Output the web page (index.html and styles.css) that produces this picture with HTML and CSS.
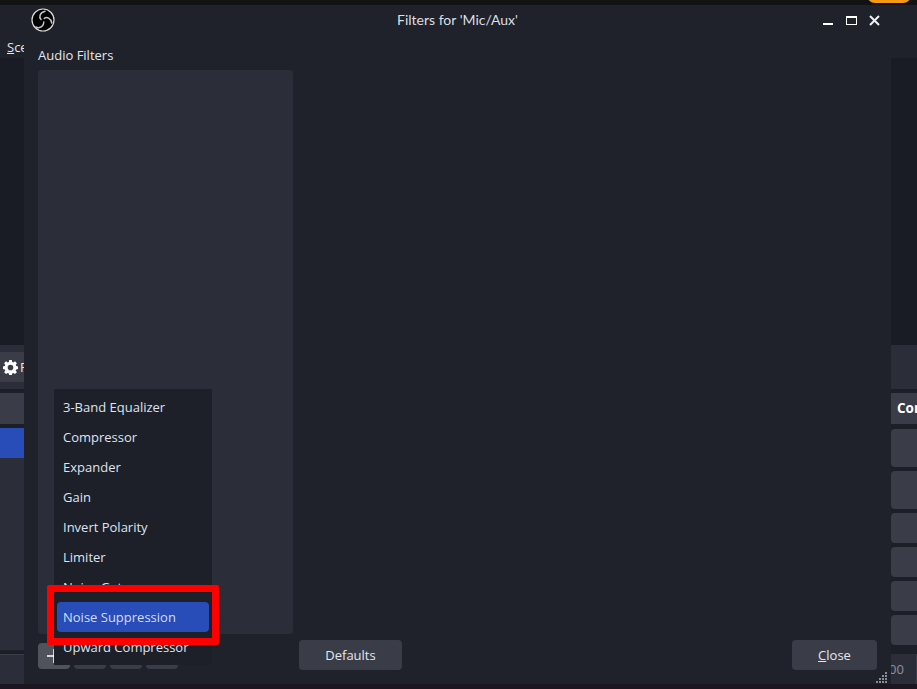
FILE: index.html
```html
<!DOCTYPE html>
<html lang="en">
<head>
<meta charset="utf-8">
<title>Filters for 'Mic/Aux'</title>
<link rel="stylesheet" href="styles.css">
</head>
<body>
<div class="screen">
  <div class="topbar"><span class="pill"></span></div>
  <div class="app">
    <div class="side side-left">
      <div class="menu-strip"><span class="menu-word"><u>S</u>cenes</span></div>
      <div class="preview"></div>
      <div class="toolbar">
        <div class="tool-btn">
          <svg class="gear" viewBox="0 0 16 16" width="15" height="15"><path fill="#fff" fill-rule="evenodd" d="M6.600 0h2.800l.4 2.100 1.200.5L12.800 1.400l2 2-1.200 1.800.5 1.200 1.900.4v2.800l-1.900.4-.5 1.200 1.200 1.800-2 2-1.800-1.200-1.200.5-.4 1.900H6.600l-.4-1.900-1.200-.5-1.800 1.200-2-2 1.200-1.800-.5-1.200L0 9.600V6.800l1.900-.4.500-1.200-1.200-1.800 2-2L5 2.600l1.200-.5zM8 5a3 3 0 1 0 0 6 3 3 0 0 0 0-6z"/></svg>
          <span class="tool-label">Filters</span>
        </div>
      </div>
      <div class="source-head"></div>
      <div class="source-sel"></div>
      <div class="source-list"></div>
      <div class="status-cell"></div>
    </div>
    <div class="side side-right">
      <div class="menu-strip"></div>
      <div class="preview"></div>
      <div class="toolbar-tall"></div>
      <div class="controls-head"><span class="controls-word">Controls</span></div>
      <div class="ctl ctl-tall"></div>
      <div class="ctl ctl-tall"></div>
      <div class="ctl"></div>
      <div class="ctl"></div>
      <div class="ctl"></div>
      <div class="ctl"></div>
      <div class="status-right"><span class="status-word">00</span></div>
    </div>
  </div>

  <section class="dialog">
    <header class="titlebar">
      <svg class="logo" viewBox="0 0 24 24" width="24" height="24">
        <circle cx="12" cy="12" r="11" fill="#000" stroke="#dcdcdc" stroke-width="1.200"/>
        <g fill="none" stroke="#c4c4c4" stroke-width="1.500" stroke-linecap="round">
          <path d="M10 11.500C7.800 9 8.600 4.600 14 3.200"/>
          <path d="M13.300 10.400C15.800 8.600 19.800 10 20.800 15"/>
          <path d="M12.800 13.900C13 17.800 9.600 21 4.800 19"/>
        </g>
      </svg>
      <h1 class="title">Filters for 'Mic/Aux'</h1>
      <div class="winctl">
        <span class="win-min"></span>
        <span class="win-max"></span>
        <svg class="win-close" viewBox="0 0 11 11" width="11" height="11"><path d="M1 1l9 9M10 1l-9 9" stroke="#f0f0f0" stroke-width="2" fill="none"/></svg>
      </div>
    </header>
    <div class="label">Audio Filters</div>
    <div class="body">
      <div class="left-col">
        <div class="filter-list"></div>
        <div class="list-tools">
          <div class="tool tool-add"><svg viewBox="0 0 14 14" width="14" height="14"><path d="M0 7h14M7 0v14" stroke="#fff" stroke-width="1.500"/></svg></div>
          <div class="tool"></div>
          <div class="tool"></div>
          <div class="tool"></div>
        </div>
      </div>
      <div class="right-col">
        <div class="buttons">
          <button class="btn btn-defaults">Defaults</button>
          <button class="btn btn-close"><u>C</u>lose</button>
        </div>
      </div>
    </div>
    <div class="popup">
      <div class="item">3-Band Equalizer</div>
      <div class="item">Compressor</div>
      <div class="item">Expander</div>
      <div class="item">Gain</div>
      <div class="item">Invert Polarity</div>
      <div class="item">Limiter</div>
      <div class="item">Noise Gate</div>
      <div class="item item-active">Noise Suppression</div>
      <div class="item">Upward Compressor</div>
    </div>
    <div class="callout"></div>
    <svg class="grip" viewBox="0 0 11 11" width="11" height="11" fill="#8a8c93">
      <rect x="9" y="0" width="2" height="2"/>
      <rect x="6" y="3" width="2" height="2"/><rect x="9" y="3" width="2" height="2"/>
      <rect x="3" y="6" width="2" height="2"/><rect x="6" y="6" width="2" height="2"/><rect x="9" y="6" width="2" height="2"/>
      <rect x="0" y="9" width="2" height="2"/><rect x="3" y="9" width="2" height="2"/><rect x="6" y="9" width="2" height="2"/><rect x="9" y="9" width="2" height="2"/>
    </svg>
  </section>
</div>
</body>
</html>
```
FILE: styles.css
```css
* { box-sizing: border-box; }
html, body { margin: 0; padding: 0; background: #1d1f27; }
body { font-family: "Open Sans", "Noto Sans", sans-serif; font-size: 13px; color: #e4e6ee; }
.screen { position: relative; width: 917px; height: 689px; overflow: hidden; background: #1c1620; }

.topbar { height: 5px; background: #121212; position: relative; }
.pill { position: absolute; left: 867px; top: -6px; width: 44px; height: 9px; border-radius: 0 0 8px 8px; background: #f59a11; }

.app { display: flex; justify-content: space-between; height: 679px; background: #1d1f27; }
.side { overflow: hidden; display: flex; flex-direction: column; }
.side-left { width: 24px; }
.side-right { width: 26px; }
.menu-strip { height: 53px; background: #1f222b; position: relative; }
.menu-word { display: block; padding: 34px 0 0 7px; line-height: 16px; white-space: nowrap; color: #e4e6ee; }
.preview { height: 287px; background: #1a1c25; }
.toolbar { height: 44px; padding-top: 7px; background: #2b2e38; margin-bottom: 4px; }
.tool-btn { height: 30px; display: flex; align-items: center; gap: 2px; padding-left: 3px; background: #3a3d47; white-space: nowrap; }
.gear { flex: none; }
.tool-label { color: #e4e6ee; }
.source-head { height: 31px; background: #3a3d47; margin-bottom: 4px; }
.source-sel { height: 30px; background: #284cb8; }
.source-list { height: 192px; background: #2b2e38; margin-bottom: 4px; }
.status-cell { height: 30px; background: #2b2e38; border-top: 1px solid #3a3d47; }

.toolbar-tall { height: 44px; background: #2b2e38; margin-bottom: 4px; }
.controls-head { height: 31px; background: #3a3d47; padding-left: 6px; line-height: 31px; font-weight: 700; font-size: 13.500px; color: #fff; white-space: nowrap; margin-bottom: 5px; }
.ctl { height: 30px; background: #3a3d47; margin-bottom: 4px; border-radius: 4px 0 0 4px; }
.ctl-tall { height: 38px; }
.status-right { margin-top: 5px; height: 30px; background: #2b2e38; line-height: 30px; color: #8f929b; white-space: nowrap; border-right: 1px solid #3a3d47; }
.status-word { margin-left: -2px; display: block; }

.dialog { position: absolute; left: 24px; top: 5px; width: 867px; height: 679px; background: #1f222b; }
.titlebar { height: 41px; position: relative; display: flex; align-items: center; justify-content: center; padding-bottom: 13px; }
.logo { position: absolute; left: 7px; top: 3px; }
.title { margin: 0; font-family: "Lato", "Open Sans", sans-serif; font-size: 14px; font-weight: 400; color: #dcdee4; }
.winctl { position: absolute; left: 799px; top: 10px; display: flex; align-items: flex-start; }
.win-min { display: block; width: 10px; height: 2px; margin-top: 8px; background: #fff; }
.win-max { display: block; width: 11px; height: 9px; margin: 1px 0 0 13px; border: 1px solid #fff; border-top-width: 2px; }
.win-close { margin: 0 0 0 12px; }

.label { height: 18px; line-height: 18px; padding-left: 14px; color: #e4e6ee; }
.body { display: flex; padding: 6px 14px 0; }
.left-col { width: 255px; }
.filter-list { height: 564px; background: #2b2e38; border-radius: 4px; }
.list-tools { display: flex; gap: 4px; margin-top: 9px; }
.tool { width: 32px; height: 26px; border-radius: 4px; background: #3a3d47; }
.tool-add { background: #50535c; display: flex; align-items: center; padding: 0 0 0 9px; }
.right-col { flex: 1; padding: 570px 0 0 6px; }
.buttons { display: flex; justify-content: space-between; }
.btn { font: inherit; height: 30px; border: 0; border-radius: 4px; background: #3a3d47; color: #e4e6ee; padding: 0; }
.btn-defaults { width: 103px; }
.btn-close { width: 85px; }

.popup { position: absolute; left: 30px; top: 384px; width: 158px; height: 276px; padding: 3px; background: #1d1f29; }
.item { height: 30px; line-height: 30px; padding-left: 6px; border-radius: 4px; color: #dfe3f0; white-space: nowrap; }
.item-active { background: #284cb8; color: #d5def8; }
.callout { position: absolute; left: 23px; top: 580px; width: 172px; height: 60px; border: 7px solid #ff0000; border-radius: 2px; }
.grip { position: absolute; left: 852px; top: 667px; }
```
